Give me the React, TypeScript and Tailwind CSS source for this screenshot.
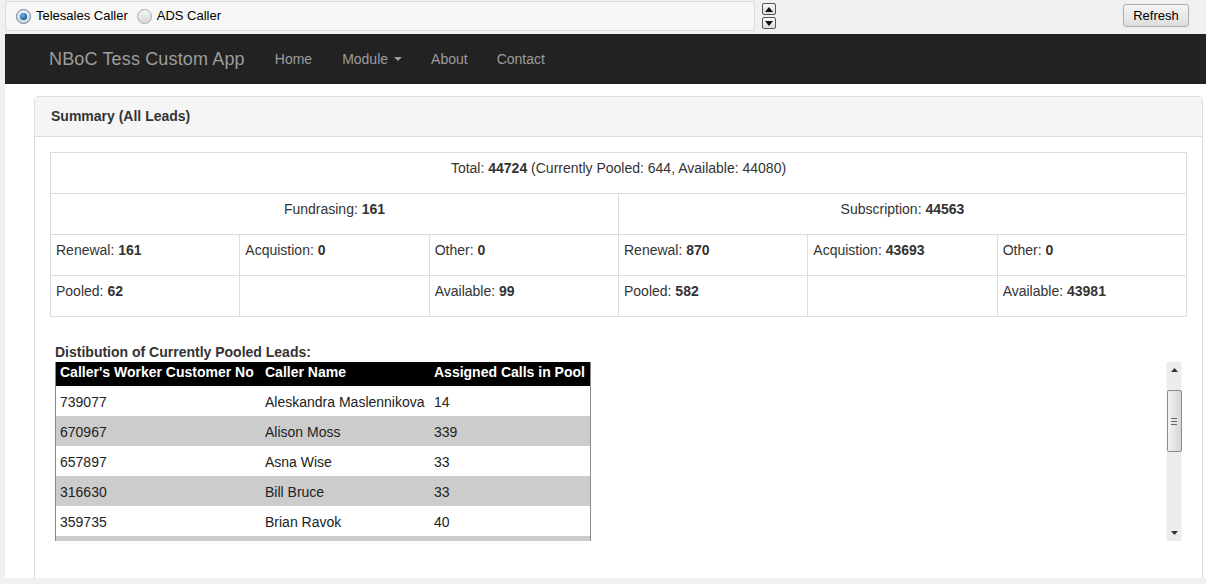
const summaryCell = "border border-[#ddd] px-[5px] pt-[5px] pb-[15px] leading-[20px] align-top";

type Caller = { no: string; name: string; calls: number };

const CALLERS: Caller[] = [
  { no: "739077", name: "Aleskandra Maslennikova", calls: 14 },
  { no: "670967", name: "Alison Moss", calls: 339 },
  { no: "657897", name: "Asna Wise", calls: 33 },
  { no: "316630", name: "Bill Bruce", calls: 33 },
  { no: "359735", name: "Brian Ravok", calls: 40 },
];

const Radio = ({ checked, label }: { checked?: boolean; label: string }) => (
  <label className="flex items-center gap-[5px] mr-[9px]">
    <span
      className={
        "flex h-[15px] w-[15px] items-center justify-center rounded-full border " +
        (checked
          ? "border-[#6b7f91] bg-gradient-to-b from-[#e8eef3] to-[#cfd8e0]"
          : "border-[#a9a9a9] bg-gradient-to-b from-[#f4f4f4] to-[#d9d9d9]")
      }
    >
      {checked && (
        <span className="h-[7px] w-[7px] rounded-full bg-[radial-gradient(circle_at_40%_35%,#6fb0ea,#1d5e9e_70%)]" />
      )}
    </span>
    <span className="text-[13px] text-black">{label}</span>
  </label>
);

const SpinButton = ({ up }: { up?: boolean }) => (
  <div className="flex h-[12px] w-[14px] items-center justify-center rounded-[2px] border border-[#555] bg-gradient-to-b from-[#fafafa] to-[#dcdcdc]">
    <svg width="8" height="5" viewBox="0 0 8 5">
      <path d={up ? "M0 5 L4 0 L8 5 Z" : "M0 0 L4 5 L8 0 Z"} fill="#111" />
    </svg>
  </div>
);

const ScrollBar = () => (
  <div className="flex h-[179px] w-[16px] flex-col items-center border-x border-[#f7f7f7] bg-[#ececec]">
    <div className="flex h-[16px] w-full items-center justify-center">
      <svg width="7" height="4" viewBox="0 0 7 4">
        <path d="M0 4 L3.5 0 L7 4 Z" fill="#333" />
      </svg>
    </div>
    <div className="mt-[12px] flex h-[62px] w-[15px] flex-col items-center justify-center gap-[2px] rounded-[2px] border border-[#8c8c8c] bg-gradient-to-r from-[#f3f3f3] to-[#d6d6d6]">
      <span className="h-px w-[6px] bg-[#666]" />
      <span className="h-px w-[6px] bg-[#666]" />
      <span className="h-px w-[6px] bg-[#666]" />
    </div>
    <div className="flex-1" />
    <div className="flex h-[16px] w-full items-center justify-center">
      <svg width="7" height="4" viewBox="0 0 7 4">
        <path d="M0 0 L3.5 4 L7 0 Z" fill="#333" />
      </svg>
    </div>
  </div>
);

const App: React.FC = () => {
  return (
    <div className="h-[584px] w-[1206px] overflow-hidden bg-[#f0f0f0] font-['Liberation_Sans',Arial,sans-serif]">
      {/* caller switcher strip */}
      <div className="flex h-[34px] items-start">
        <div className="ml-[5px] mt-[1px] flex h-[30px] w-[750px] items-center border border-[#dcdcdc] bg-[#f7f7f7] pl-[10px]">
          <Radio checked label="Telesales Caller" />
          <Radio label="ADS Caller" />
        </div>
        <div className="ml-[7px] mt-[3px] flex flex-col gap-[2px]">
          <SpinButton up />
          <SpinButton />
        </div>
        <button className="ml-auto mr-[17px] mt-[4px] h-[23px] w-[66px] rounded-[3px] border border-[#adadad] bg-gradient-to-b from-[#f4f4f4] to-[#dedede] text-[13px] text-black">
          Refresh
        </button>
      </div>

      <div className="ml-[5px] h-[544px] overflow-hidden bg-white">
        <nav className="flex h-[50px] items-center bg-[#222] pl-[44px] text-[#9d9d9d]">
          <span className="mr-[15px] text-[18px] tracking-[0.15px]">NBoC Tess Custom App</span>
          <span className="px-[15px] text-[14px]">Home</span>
          <span className="flex items-center px-[15px] text-[14px]">
            Module
            <span className="ml-[6px] h-0 w-0 border-x-[4px] border-t-[4px] border-x-transparent border-t-[#9d9d9d]" />
          </span>
          <span className="px-[14px] text-[14px]">About</span>
          <span className="px-[15px] text-[14px]">Contact</span>
        </nav>

        <div className="ml-[29px] mt-[12px] w-[1169px] rounded-[4px] border border-[#ddd] text-[14px] text-[#333]">
          <div className="flex h-[40px] items-center border-b border-[#ddd] bg-[#f5f5f5] px-[16px] font-bold">
            Summary (All Leads)
          </div>
          <div className="px-[15px] pb-[60px] pt-[15px]">
            <table className="w-full table-fixed border-collapse">
              <tbody>
                <tr>
                  <td colSpan={6} className={summaryCell + " text-center"}>
                    Total: <b>44724</b> (Currently Pooled: 644, Available: 44080)
                  </td>
                </tr>
                <tr>
                  <td colSpan={3} className={summaryCell + " text-center"}>
                    Fundrasing: <b>161</b>
                  </td>
                  <td colSpan={3} className={summaryCell + " text-center"}>
                    Subscription: <b>44563</b>
                  </td>
                </tr>
                <tr>
                  <td className={summaryCell}>Renewal: <b>161</b></td>
                  <td className={summaryCell}>Acquistion: <b>0</b></td>
                  <td className={summaryCell}>Other: <b>0</b></td>
                  <td className={summaryCell}>Renewal: <b>870</b></td>
                  <td className={summaryCell}>Acquistion: <b>43693</b></td>
                  <td className={summaryCell}>Other: <b>0</b></td>
                </tr>
                <tr>
                  <td className={summaryCell}>Pooled: <b>62</b></td>
                  <td className={summaryCell}></td>
                  <td className={summaryCell}>Available: <b>99</b></td>
                  <td className={summaryCell}>Pooled: <b>582</b></td>
                  <td className={summaryCell}></td>
                  <td className={summaryCell}>Available: <b>43981</b></td>
                </tr>
              </tbody>
            </table>

            <div className="px-[5px]">
              <div className="mb-[2px] mt-[27px] font-bold leading-[16px]">
                Distibution of Currently Pooled Leads:
              </div>
              <div className="flex">
                <div className="h-[179px] w-[536px] overflow-hidden border-x border-[#8a8a8a]">
                  <table className="w-[534px] table-fixed border-collapse text-left">
                    <thead>
                      <tr className="h-[24px] bg-black text-white">
                        <th className="w-[204px] px-[4px] align-top font-bold leading-[20px]">Caller's Worker Customer No</th>
                        <th className="w-[170px] px-[5px] align-top font-bold leading-[20px]">Caller Name</th>
                        <th className="px-[4px] align-top font-bold leading-[20px]">Assigned Calls in Pool</th>
                      </tr>
                    </thead>
                    <tbody className="text-[#222]">
                      {CALLERS.map((c: Caller, i: number) => (
                        <tr key={c.no} className={i % 2 ? "bg-[#cccccc]" : "bg-white"}>
                          <td className="px-[4px] pb-[4px] pt-[6px] align-top leading-[20px]">{c.no}</td>
                          <td className="px-[5px] pb-[4px] pt-[6px] align-top leading-[20px]">{c.name}</td>
                          <td className="px-[4px] pb-[4px] pt-[6px] align-top leading-[20px]">{c.calls}</td>
                        </tr>
                      ))}
                      <tr className="h-[30px] bg-[#cccccc]">
                        <td colSpan={3} />
                      </tr>
                    </tbody>
                  </table>
                </div>
                <div className="flex-1" />
                <ScrollBar />
              </div>
            </div>
          </div>
        </div>
      </div>
    </div>
  );
};

export default App;
